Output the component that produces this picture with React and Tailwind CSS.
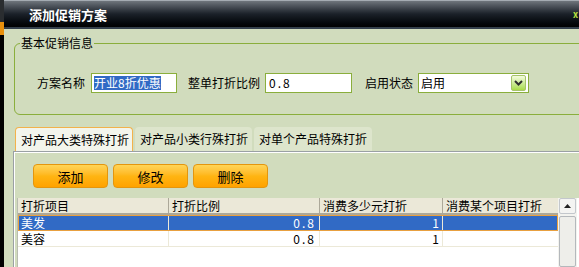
const rows = [
  { name: "美发", rate: "0.8", amount: "1", item: "", selected: true },
  { name: "美容", rate: "0.8", amount: "1", item: "", selected: false },
];

const cols = "grid grid-cols-[150px_151px_123px_117px]";

function TitleBar() {
  return (
    <div className="flex h-[29px] shrink-0 flex-col">
      <div className="h-[1px] bg-[#a4abb2]" />
      <div className="flex flex-1 items-center bg-gradient-to-b from-[#6f757c] via-[#1b2129] to-[#010203]">
        <span className="ml-[25px] w-[80px] text-[13px] font-bold leading-none text-white">添加促销方案</span>
        <span className="ml-auto mr-[1px] text-[9px] font-bold leading-none text-[#b8e040]">x</span>
      </div>
      <div className="h-[2px] bg-[#34404c]" />
    </div>
  );
}

function Field({ label, children, gap }) {
  return (
    <div className={`flex items-center ${gap}`}>
      <span className="leading-[20px]">{label}</span>
      {children}
    </div>
  );
}

function BasicInfo() {
  return (
    <fieldset className="mt-[6px] w-[600px] rounded-l-[6px] border border-[#8aae3c] pt-[22px] pb-[21px]">
      <legend className="ml-[5px] px-[1px] leading-[16px]">基本促销信息</legend>
      <div className="flex items-center pl-[22px]">
        <Field label="方案名称" gap="gap-[6px]">
          <div className="flex h-[20px] w-[86px] items-center border border-[#8aae3c] bg-white pl-[2px]">
            <span className="bg-[#316ac5] leading-[14px] text-white">开业8折优惠</span>
          </div>
        </Field>
        <div className="ml-[11px]">
          <Field label="整单打折比例" gap="gap-[5px]">
            <div className="flex h-[20px] w-[87px] items-center border border-[#8aae3c] bg-white pl-[3px] tracking-[2px]">
              0.8
            </div>
          </Field>
        </div>
        <div className="ml-[13px]">
          <Field label="启用状态" gap="gap-[5px]">
            <div className="flex h-[20px] w-[111px] items-center justify-between border border-[#8aae3c] bg-white pl-[2px] pr-[2px]">
              <span>启用</span>
              <span className="flex h-[16px] w-[15px] items-center justify-center rounded-[2px] border border-[#a6c46a] bg-gradient-to-b from-[#f4fbdc] to-[#a9dc44]">
                <svg width="9" height="6" viewBox="0 0 9 6">
                  <path d="M1 1 L4.5 4.5 L8 1" fill="none" stroke="#2f2f2f" strokeWidth="2" />
                </svg>
              </span>
            </div>
          </Field>
        </div>
      </div>
    </fieldset>
  );
}

function Tabs() {
  return (
    <div className="mt-[12px] ml-[1px] flex h-[24px] gap-[2px]">
      <div className="flex w-[118px] items-center rounded-t-[4px] border border-b-0 border-[#f2b24c] bg-[#f3f5ec] pl-[5px]">
        对产品大类特殊打折
      </div>
      <div className="flex w-[117px] items-center rounded-t-[4px] bg-[#dde5cc] pl-[5px]">
        对产品小类行殊打折
      </div>
      <div className="flex w-[118px] items-center rounded-t-[4px] bg-[#dde5cc] pl-[5px]">
        对单个产品特殊打折
      </div>
    </div>
  );
}

function OrangeButton({ children }) {
  return (
    <button className="h-[24px] w-[75px] rounded-[4px] border border-[#e4960e] bg-gradient-to-b from-[#ffd555] via-[#ffb512] to-[#ffa200] text-[13px] leading-none text-black">
      {children}
    </button>
  );
}

function Scrollbar() {
  return (
    <div className="flex w-[19px] shrink-0 flex-col bg-[#f3f3ef] px-[1px]">
      <div className="flex h-[16px] items-center justify-center rounded-[2px] border border-[#c3c7cc] bg-[#f4f4f2]">
        <svg width="7" height="4" viewBox="0 0 7 4">
          <path d="M0 4 L3.5 0 L7 4 Z" fill="#222" />
        </svg>
      </div>
      <div className="mt-[2px] flex-1 rounded-[2px] border border-[#b4b8bc] bg-[#eeeeea]" />
    </div>
  );
}

function DataGrid() {
  return (
    <div className="mt-[10px] ml-[-16px] flex flex-1 bg-white">
      <div className="flex w-[541px] flex-col border-l border-[#b8bcb0]">
        <div className={`${cols} h-[17px] border-b-2 border-[#aca899] bg-[#ebe8d8]`}>
          {["打折项目", "打折比例", "消费多少元打折", "消费某个项目打折"].map((h, i) => (
            <div
              key={h}
              className={`flex items-center pl-[3px] leading-none ${i > 0 ? "border-l border-[#aca899]" : ""}`}
            >
              {h}
            </div>
          ))}
        </div>
        {rows.map((r) => (
          <div
            key={r.name}
            className={`${cols} h-[16px] leading-none ${
              r.selected
                ? "bg-[#316ac5] text-white outline outline-1 -outline-offset-1 outline-[#e8a040]"
                : "border-b border-[#ece9d8] bg-white"
            }`}
          >
            <div className="flex items-center pl-[3px]">{r.name}</div>
            <div className="flex items-center justify-end border-l border-[#ece9d8] pr-[3px] tracking-[2px]">
              {r.rate}
            </div>
            <div className="flex items-center justify-end border-l border-[#ece9d8] pr-[3px]">{r.amount}</div>
            <div className="flex items-center border-l border-[#ece9d8]">{r.item}</div>
          </div>
        ))}
      </div>
      <Scrollbar />
    </div>
  );
}

export default function App() {
  return (
    <div className="flex h-[267px] w-[579px] overflow-hidden bg-black font-['Noto_Sans_CJK_SC',sans-serif] text-[12px] text-black">
      <div className="flex w-[4px] shrink-0 flex-col">
        <div className="h-[22px] bg-[#2a2d30]" />
        <div className="h-[13px] bg-[#e8900c]" />
        <div className="flex-1 bg-black" />
      </div>
      <div className="flex min-w-0 flex-1 flex-col">
        <TitleBar />
        <div className="flex min-h-0 flex-1 flex-col overflow-hidden bg-[#d1dcbd] pl-[10px]">
          <BasicInfo />
          <Tabs />
          <div className="ml-[-1px] flex w-[600px] flex-1 flex-col border-t border-l border-[#9aa0a4]">
            <div className="flex flex-1 flex-col border-t border-l border-white pt-[11px] pl-[18px]">
              <div className="flex gap-[5px]">
                <OrangeButton>添加</OrangeButton>
                <OrangeButton>修改</OrangeButton>
                <OrangeButton>删除</OrangeButton>
              </div>
              <DataGrid />
            </div>
          </div>
        </div>
      </div>
    </div>
  );
}
